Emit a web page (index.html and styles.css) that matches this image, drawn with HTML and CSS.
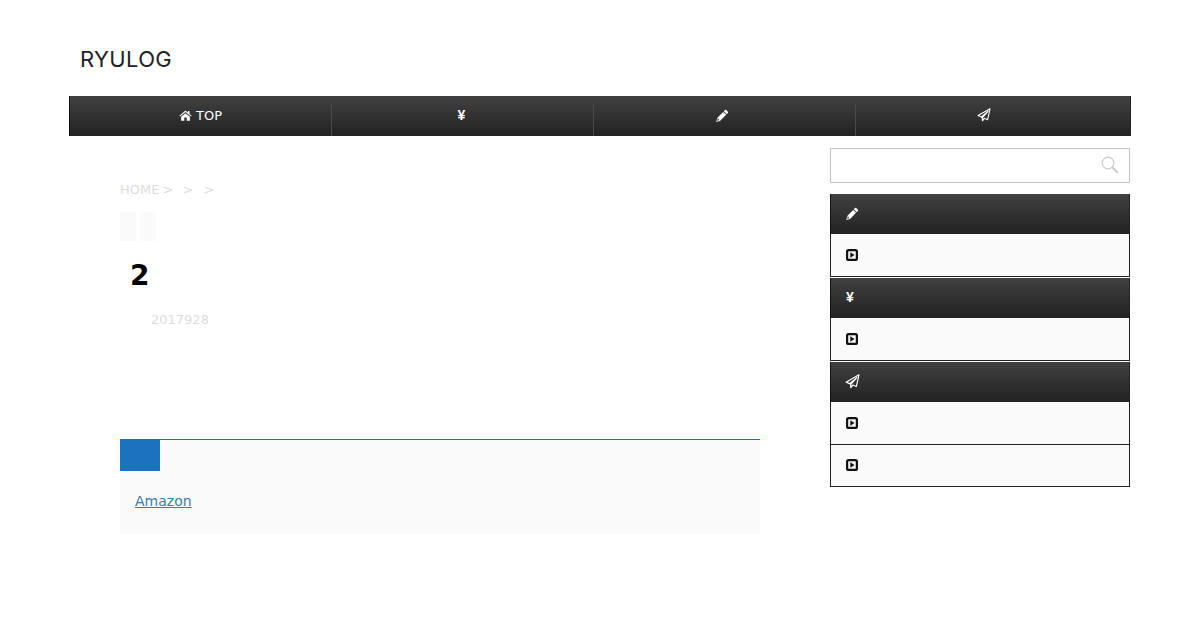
FILE: index.html
```html
<!DOCTYPE html>
<html lang="en">
<head>
    <meta charset="UTF-8">
    <meta name="viewport" content="width=device-width, initial-scale=1.0">
    <title>RYULOG</title>
    <link rel="stylesheet" href="styles.css">
</head>
<body>
    <svg class="icon-defs" aria-hidden="true">
        <symbol id="i-pencil" viewBox="0 0 14 14"><path d="M9.600 1.200a1 1 0 0 1 1.400 0l1.800 1.800a1 1 0 0 1 0 1.400l-1.200 1.200-3.200-3.200zM7.700 3.100l3.200 3.200-6.600 6.600-4 1 1-4.100zM2 9.700l-.7 2.900 2.100-.5-1.400-2.400z" fill="currentColor"/></symbol>
        <symbol id="i-plane" viewBox="0 0 14 14"><path d="M13 .8 1 7.600l3.400 1.400L11 3.400 5.400 9.600v3.200l1.900-2.500 3.300 1.400z" fill="none" stroke="currentColor" stroke-width="1.100" stroke-linejoin="round"/><path d="M1 7.600l3.400 1.400L11 3.400 5.400 9.600v3.200l-1-3.800z" fill="currentColor"/></symbol>
        <symbol id="i-play" viewBox="0 0 12 12"><rect x="1.100" y="1.100" width="9.800" height="9.800" rx="1.500" fill="#f6f6f6" stroke="currentColor" stroke-width="2.200"/><path d="M4.300 3.200 8.500 6 4.300 8.800z" fill="currentColor"/></symbol>
    </svg>

    <div class="wrapper">
        <header class="site-header">
            <a class="logo" href="#">RYULOG</a>
        </header>

        <nav class="global-nav">
            <a href="#">
                <svg class="nav-icon home" viewBox="0 0 14 12"><path d="M7 .6.3 6.200l.7.8L7 2.100 13 7l.7-.8L11.400 4.300V1.200H9.700v1.600zM2.200 7.400V11.600H5.700V8.300H8.300V11.600H11.800V7.400L7 3.500z" fill="currentColor"/></svg>
                TOP
            </a>
            <a href="#"><span class="yen">¥</span></a>
            <a href="#"><svg class="nav-icon pencil"><use href="#i-pencil"/></svg></a>
            <a href="#"><svg class="nav-icon plane"><use href="#i-plane"/></svg></a>
        </nav>

        <div class="content">
            <main class="main">
                <div class="breadcrumb">
                    <span class="crumb-home">HOME &gt;</span>
                    <span>&gt;</span>
                    <span>&gt;</span>
                </div>
                <div class="tags">
                    <span class="tag"></span>
                    <span class="tag"></span>
                </div>
                <h1 class="post-title">2</h1>
                <div class="post-date">2017928</div>

                <section class="related">
                    <div class="related-label"></div>
                    <div class="related-body">
                        <a href="#">Amazon</a>
                    </div>
                </section>
            </main>

            <aside class="sidebar">
                <form class="search">
                    <input type="text" class="search-input">
                    <svg class="search-icon" viewBox="0 0 18 18"><circle cx="7" cy="7" r="5.800" fill="none" stroke="currentColor" stroke-width="1.300"/><path d="m11.300 11.300 5.500 5.500" stroke="currentColor" stroke-width="2" fill="none"/></svg>
                </form>

                <div class="widget">
                    <h3 class="widget-title"><svg class="widget-icon"><use href="#i-pencil"/></svg></h3>
                    <ul class="widget-list">
                        <li><svg class="play-icon"><use href="#i-play"/></svg></li>
                    </ul>
                </div>
                <div class="widget">
                    <h3 class="widget-title"><span class="yen">¥</span></h3>
                    <ul class="widget-list">
                        <li><svg class="play-icon"><use href="#i-play"/></svg></li>
                    </ul>
                </div>
                <div class="widget">
                    <h3 class="widget-title"><svg class="widget-icon plane"><use href="#i-plane"/></svg></h3>
                    <ul class="widget-list">
                        <li><svg class="play-icon"><use href="#i-play"/></svg></li>
                        <li><svg class="play-icon"><use href="#i-play"/></svg></li>
                    </ul>
                </div>
            </aside>
        </div>
    </div>
</body>
</html>
```

FILE: styles.css
```css
body {
    margin: 0;
    background: #fff;
    color: #000;
    font-family: 'DejaVu Sans', Verdana, sans-serif;
    font-size: 13px;
}
a {
    color: inherit;
    text-decoration: none;
}
.icon-defs {
    display: none;
}
.wrapper {
    width: 1062px;
    margin: 0 auto;
}
.site-header {
    height: 96px;
    box-sizing: border-box;
    padding: 46px 0 0 11px;
}
.logo {
    font-family: Inter, 'Open Sans', sans-serif;
    font-size: 22px;
    line-height: 27px;
    letter-spacing: 0.35px;
    color: #222;
    display: block;
}
.global-nav {
    display: flex;
    height: 40px;
    background: linear-gradient(#414141, #222);
    border-left: 1px solid #111;
    border-right: 1px solid #222;
    box-sizing: border-box;
}
.global-nav a {
    width: 262px;
    height: 32px;
    margin-top: 8px;
    box-sizing: border-box;
    border-right: 1px solid #4a4a4a;
    display: flex;
    align-items: center;
    justify-content: center;
    gap: 4px;
    color: #fff;
    font-size: 13px;
    padding-bottom: 10px;
}
.global-nav a:last-child {
    border-right: none;
}
.global-nav .yen {
    margin-right: 2px;
}
.nav-icon {
    width: 13px;
    height: 13px;
    color: #fff;
}
.nav-icon.home {
    width: 13px;
    height: 11px;
}
.nav-icon.pencil {
    margin-right: 4px;
}
.nav-icon.plane {
    width: 14px;
    height: 14px;
    margin-right: 6px;
}
.yen {
    font-family: 'Liberation Sans', Arial, sans-serif;
    font-weight: bold;
    font-size: 14px;
    color: #fff;
}
.content {
    display: flex;
    justify-content: space-between;
    padding: 0 1px 0 51px;
}
.main {
    width: 640px;
    padding-top: 46px;
}
.breadcrumb {
    display: flex;
    gap: 10px;
    color: #ddd;
    line-height: 15px;
}
.crumb-home {
    word-spacing: -1px;
    margin-right: -1px;
}
.tags {
    display: flex;
    gap: 4px;
    margin-top: 15px;
}
.tag {
    width: 16px;
    height: 29px;
    background: #fafafa;
}
.post-title {
    margin: 17px 0 0 10px;
    font-size: 28px;
    line-height: 36px;
    font-weight: bold;
}
.post-date {
    margin: 18px 0 0 31px;
    color: #ddd;
    line-height: 16px;
}
.related {
    margin-top: 111px;
    background: #fafafa;
    border-top: 1px solid #1b72be;
    height: 94px;
}
.related-label {
    width: 40px;
    height: 31px;
    background: #1b72be;
}
.related-body {
    padding: 21px 15px 0;
    font-size: 14px;
    line-height: 18px;
}
.related-body a {
    color: #3b7ea8;
    text-decoration: underline;
}
.sidebar {
    width: 300px;
    padding-top: 12px;
}
.search {
    position: relative;
    height: 35px;
    margin-bottom: 11px;
}
.search-input {
    display: block;
    width: 100%;
    height: 100%;
    box-sizing: border-box;
    border: 1px solid #c4c4c4;
    background: #fff;
    padding: 0;
}
.search-icon {
    position: absolute;
    right: 11px;
    top: 8px;
    width: 18px;
    height: 18px;
    color: #ccc;
}
.widget {
    margin-bottom: 1px;
}
.widget-title {
    margin: 0;
    height: 40px;
    box-sizing: border-box;
    padding: 0 0 2px 15px;
    display: flex;
    align-items: center;
    background: linear-gradient(#414141, #222);
    border-left: 1px solid #111;
    border-right: 1px solid #222;
}
.widget-icon {
    width: 13px;
    height: 13px;
    color: #fff;
}
.widget-icon.plane {
    width: 15px;
    height: 15px;
    margin-left: -1px;
}
.widget-list {
    list-style: none;
    margin: 0;
    padding: 0;
}
.widget-list li {
    height: 43px;
    box-sizing: border-box;
    background: #fafafa;
    border: 1px solid #222;
    border-top: none;
    padding-left: 15px;
    display: flex;
    align-items: center;
}
.widget-list li + li {
    height: 42px;
    padding-bottom: 1px;
}
.play-icon {
    width: 12px;
    height: 12px;
    color: #111;
}
```
